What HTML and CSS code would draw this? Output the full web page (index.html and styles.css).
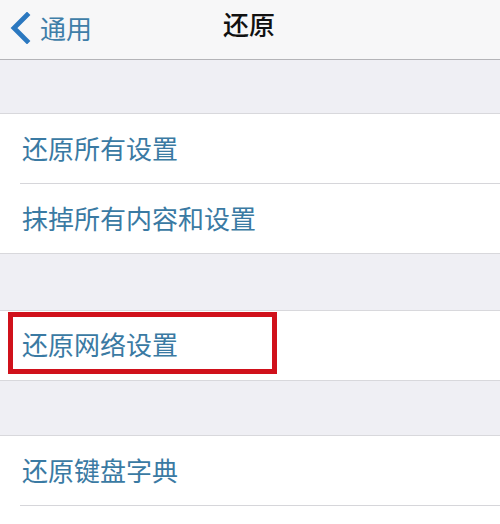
FILE: index.html
```html
<!DOCTYPE html>
<html lang="zh">
<head>
<meta charset="utf-8">
<link rel="stylesheet" href="styles.css">
</head>
<body>
<div class="screen">
  <header class="nav">
    <div class="back">
      <svg class="chev" width="22" height="32" viewBox="0 0 22 32"><path d="M18 3 L5 16 L18 29" fill="none" stroke="#2b78c0" stroke-width="4.8" stroke-linecap="square"/></svg>
      <span class="back-text">通用</span>
    </div>
    <div class="title">还原</div>
  </header>
  <div class="gap gap-first"></div>
  <section class="group">
    <div class="row"><span class="label">还原所有设置</span></div>
    <div class="row"><span class="label">抹掉所有内容和设置</span></div>
  </section>
  <div class="gap"></div>
  <section class="group">
    <div class="row highlighted"><span class="label">还原网络设置</span><div class="mark"></div></div>
  </section>
  <div class="gap gap-third"></div>
  <section class="group">
    <div class="row"><span class="label">还原键盘字典</span></div>
    <div class="row"></div>
  </section>
</div>
</body>
</html>
```
FILE: styles.css
```css
* { box-sizing: border-box; margin: 0; padding: 0; }
html, body { width: 500px; height: 524px; overflow: hidden; }
body {
  background: #efeff4;
  font-family: "Noto Sans CJK SC", "Noto Sans", sans-serif;
}
.screen { display: flex; flex-direction: column; }
.nav {
  height: 60px;
  background: #f7f7f8;
  border-bottom: 1px solid #b4b4b8;
  position: relative;
  display: flex;
  align-items: center;
}
.back {
  display: flex;
  align-items: center;
  padding-left: 9px;
  gap: 9px;
  margin-top: -3px;
}
.chev { display: block; }
.back-text {
  color: #3f7ea8;
  font-size: 26px;
  line-height: 30px;
}
.title {
  position: absolute;
  left: 0; right: 0; top: 7px;
  text-align: center;
  font-size: 26px;
  line-height: 34px;
  font-weight: 500;
  color: #111;
  padding-right: 2px;
}
.gap { height: 56px; }
.gap-first { height: 53px; }
.gap-third { height: 54px; }
.group {
  background: #fff;
  border-top: 1px solid #d8d8dc;
  border-bottom: 1px solid #d8d8dc;
}
.row {
  height: 69px;
  margin-left: 20px;
  display: flex;
  align-items: center;
  position: relative;
}
.row + .row { border-top: 1px solid #d6d6da; height: 70px; }
.label {
  color: #3a7aa3;
  font-size: 26px;
  line-height: 34px;
  padding-left: 2px;
  margin-top: -2px;
}
.highlighted .label { margin-top: -4px; }
.mark {
  position: absolute;
  left: -12px;
  top: 1px;
  width: 269px;
  height: 62px;
  border: 5px solid #d0111b;
}
```
